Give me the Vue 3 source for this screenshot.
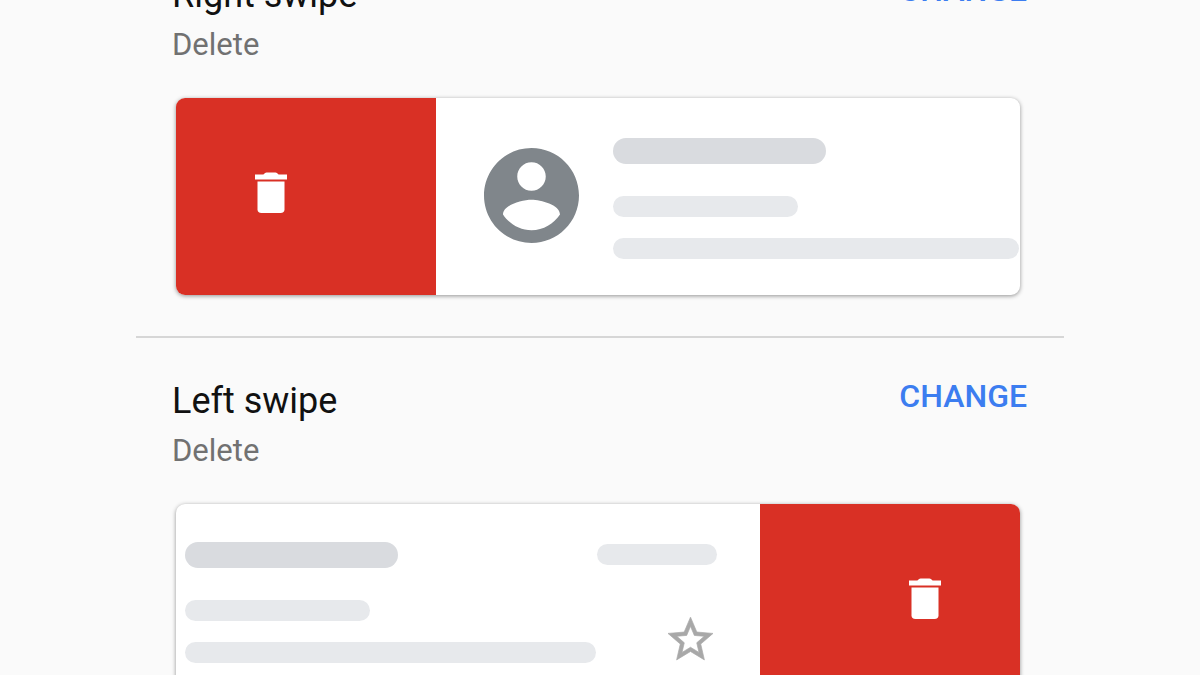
<script setup>
const actions = [
  { id: 'right', title: 'Right swipe', value: 'Delete' },
  { id: 'left', title: 'Left swipe', value: 'Delete' },
]
</script>

<template>
  <main class="screen">
    <div class="settings">
      <section v-for="action in actions" :key="action.id" class="setting">
        <header class="heading">
          <div>
            <h2 :id="action.id" class="title">{{ action.title }}</h2>
            <p class="value">{{ action.value }}</p>
          </div>
          <button type="button" class="change" :aria-describedby="action.id">CHANGE</button>
        </header>

        <div class="card" :class="action.id">
          <div class="swipe">
            <svg class="trash" viewBox="0 0 32 41" aria-hidden="true">
              <path d="M0 2.6H8.4L9.8 1.2Q10.5 .5 11.6 .5H20.4Q21.5 .5 22.2 1.2L23.6 2.6H32V7.6H0Z" />
              <path d="M2.5 9.4H29.5V37.2Q29.5 41 25.5 41H6.5Q2.5 41 2.5 37.2Z" />
            </svg>
          </div>
          <div class="message">
            <svg v-if="action.id === 'right'" class="avatar" viewBox="2 2 20 20" aria-hidden="true">
              <path d="M12 2C6.48 2 2 6.48 2 12s4.48 10 10 10 10-4.48 10-10S17.52 2 12 2zm0 3c1.66 0 3 1.34 3 3s-1.34 3-3 3-3-1.34-3-3 1.34-3 3-3zm0 14.3c-2.5 0-4.71-1.38-6-3.32.03-1.99 4-3.08 6-3.08 1.99 0 5.97 1.09 6 3.08-1.29 1.94-3.5 3.32-6 3.32z" />
            </svg>
            <div class="lines">
              <span class="bar sender"></span>
              <span class="bar subject"></span>
              <span class="bar"></span>
            </div>
            <div v-if="action.id === 'left'" class="meta">
              <span class="bar"></span>
              <svg class="star" viewBox="2 2 20 19" aria-hidden="true">
                <path d="M22 9.24l-7.19-.62L12 2 9.19 8.63 2 9.24l5.46 4.73L5.82 21 12 17.27 18.18 21l-1.63-7.03L22 9.24zM12 15.4l-3.76 2.27 1-4.28-3.32-2.88 4.38-.38L12 6.1l1.71 4.04 4.38.38-3.32 2.88 1 4.28L12 15.4z" />
              </svg>
            </div>
          </div>
        </div>
      </section>
    </div>
  </main>
</template>

<style>
body {
  background: #fafafa;
}
</style>

<style scoped>
.screen {
  height: 100vh;
  overflow: hidden;
  background: #fafafa;
  font-family: Roboto, sans-serif;
}

/* The list is scrolled partway through its first entry. */
.settings {
  margin: -70px 136px 0;
}

.setting {
  border-top: 2px solid #d6d6d6;
  padding: 42px 37px 41px 36px;
}

.heading {
  display: flex;
  justify-content: space-between;
  align-items: flex-start;
}

.title {
  margin: 0;
  font-size: 36px;
  font-weight: 400;
  line-height: 42px;
  color: #111;
}

.value {
  margin: 10px 0 0;
  font-size: 31px;
  line-height: 38px;
  color: #717171;
}

.change {
  border: 0;
  padding: 0;
  background: none;
  font-family: inherit;
  font-size: 32px;
  font-weight: 500;
  line-height: 32px;
  color: #3c7df0;
  cursor: pointer;
}

.card {
  display: flex;
  height: 197px;
  margin: 34px 7px 0 4px;
  border-radius: 9px;
  overflow: hidden;
  background: #fff;
  box-shadow: 0 1px 4px rgba(0, 0, 0, 0.42);
}

.left {
  flex-direction: row-reverse;
}

.swipe {
  display: flex;
  flex: none;
  align-items: flex-start;
  box-sizing: border-box;
  width: 260px;
  padding: 74px 79px;
  background: #d93025;
}

.left .swipe {
  justify-content: flex-end;
}

.trash {
  width: 32px;
  height: 41px;
  fill: #fff;
}

.message {
  display: flex;
  flex: 1;
  align-items: flex-start;
  min-width: 0;
}

.right .message {
  gap: 34px;
  padding: 40px 1px 0 48px;
}

.left .message {
  gap: 1px;
  padding: 38px 43px 0 9px;
}

.avatar {
  flex: none;
  width: 95px;
  height: 95px;
  margin-top: 10px;
  fill: #80868b;
}

.lines {
  display: flex;
  flex: 1;
  flex-direction: column;
  min-width: 0;
}

.bar {
  height: 21px;
  border-radius: 13px;
  background: #e7e9ec;
}

.sender {
  width: 213px;
  height: 26px;
  margin-bottom: 32px;
  background: #d9dbdf;
}

.subject {
  width: 185px;
  margin-bottom: 21px;
}

.meta {
  display: flex;
  flex: none;
  flex-direction: column;
  width: 120px;
  padding-top: 2px;
}

.star {
  align-self: flex-end;
  width: 45px;
  height: 43px;
  margin: 52px 4px 0 0;
  overflow: visible;
  fill: #a8a8a8;
  stroke: #a8a8a8;
  stroke-width: 0.3;
}
</style>
